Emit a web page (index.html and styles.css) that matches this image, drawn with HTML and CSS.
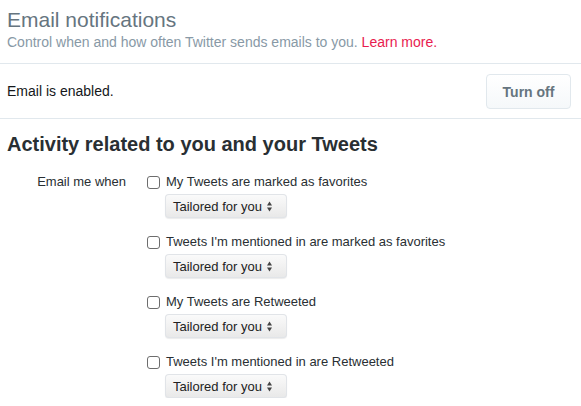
FILE: index.html
```html
<!DOCTYPE html>
<html>
<head>
<meta charset="utf-8">
<link rel="stylesheet" href="styles.css">
</head>
<body>
<div class="page">
  <header class="header">
    <h1 class="title">Email notifications</h1>
    <p class="subtitle">Control when and how often Twitter sends emails to you. <a class="link" href="#">Learn more.</a></p>
  </header>
  <div class="status">
    <span class="status-text">Email is enabled.</span>
    <button class="btn">Turn off</button>
  </div>
  <section class="section">
    <h2 class="section-title">Activity related to you and your Tweets</h2>
    <div class="field">
      <div class="field-label">Email me when</div>
      <div class="options">
        <div class="option">
          <label class="check"><span class="box"></span>My Tweets are marked as favorites</label>
          <div class="select"><span>Tailored for you</span><svg class="arrows" width="5" height="11" viewBox="0 0 5 11"><path d="M2.5 0.5L5 4.5H0Z M2.5 10.5L5 6.5H0Z" fill="#444"/></svg></div>
        </div>
        <div class="option">
          <label class="check"><span class="box"></span>Tweets I'm mentioned in are marked as favorites</label>
          <div class="select"><span>Tailored for you</span><svg class="arrows" width="5" height="11" viewBox="0 0 5 11"><path d="M2.5 0.5L5 4.5H0Z M2.5 10.5L5 6.5H0Z" fill="#444"/></svg></div>
        </div>
        <div class="option">
          <label class="check"><span class="box"></span>My Tweets are Retweeted</label>
          <div class="select"><span>Tailored for you</span><svg class="arrows" width="5" height="11" viewBox="0 0 5 11"><path d="M2.5 0.5L5 4.5H0Z M2.5 10.5L5 6.5H0Z" fill="#444"/></svg></div>
        </div>
        <div class="option">
          <label class="check"><span class="box"></span>Tweets I'm mentioned in are Retweeted</label>
          <div class="select"><span>Tailored for you</span><svg class="arrows" width="5" height="11" viewBox="0 0 5 11"><path d="M2.5 0.5L5 4.5H0Z M2.5 10.5L5 6.5H0Z" fill="#444"/></svg></div>
        </div>
      </div>
    </div>
  </section>
</div>
</body>
</html>
```
FILE: styles.css
```css
html, body {
  margin: 0;
  padding: 0;
  background: #fff;
  font-family: "Liberation Sans", Arial, sans-serif;
  color: #14171a;
}
.page {
  width: 581px;
}
.header {
  padding: 7px 7px 0 7px;
  height: 56px;
  border-bottom: 1px solid #e1e8ed;
}
.title {
  margin: 0;
  font-size: 21px;
  font-weight: normal;
  color: #66757f;
  line-height: 26px;
}
.subtitle {
  margin: 0;
  font-size: 14px;
  line-height: 18px;
  color: #8899a6;
}
.link {
  color: #e81c4f;
  text-decoration: none;
}
.status {
  display: flex;
  align-items: center;
  justify-content: space-between;
  padding: 0 10px 0 7px;
  height: 54px;
  border-bottom: 1px solid #e1e8ed;
}
.status-text {
  font-size: 14px;
  color: #14171a;
}
.btn {
  width: 85px;
  height: 35px;
  margin-top: 1px;
  border: 1px solid #e1e8ed;
  border-radius: 4px;
  background: linear-gradient(#fff, #f5f8fa);
  color: #66757f;
  font-family: "Liberation Sans", Arial, sans-serif;
  font-size: 14px;
  font-weight: bold;
  padding: 0;
}
.section {
  padding: 0 7px;
}
.section-title {
  margin: 13px 0 0 0;
  font-size: 20px;
  line-height: 24px;
  font-weight: bold;
  color: #292f33;
}
.field {
  display: flex;
  margin-top: 18px;
}
.field-label {
  width: 140px;
  text-align: right;
  font-size: 13px;
  line-height: 16px;
  color: #292f33;
  padding-right: 21px;
  box-sizing: border-box;
}
.options {
  display: flex;
  flex-direction: column;
  gap: 16px;
}
.option {
  display: flex;
  flex-direction: column;
}
.check {
  display: flex;
  align-items: center;
  font-size: 13px;
  line-height: 16px;
  color: #292f33;
}
.box {
  width: 11px;
  height: 11px;
  border: 1px solid #6d6d6d;
  border-radius: 3px;
  margin-right: 6px;
  background: #fff;
  box-sizing: content-box;
}
.select {
  margin: 4px 0 0 18px;
  width: 122px;
  height: 24px;
  box-sizing: border-box;
  display: flex;
  align-items: center;
  justify-content: space-between;
  padding: 0 15px 0 8px;
  border-radius: 4px;
  background: linear-gradient(#fbfbfb, #e8e8e8);
  box-shadow: 0 0 0 1px #e1e4e8 inset, 0 1px 1px rgba(0,0,0,0.08);
  font-size: 13px;
  color: #222;
}
```
